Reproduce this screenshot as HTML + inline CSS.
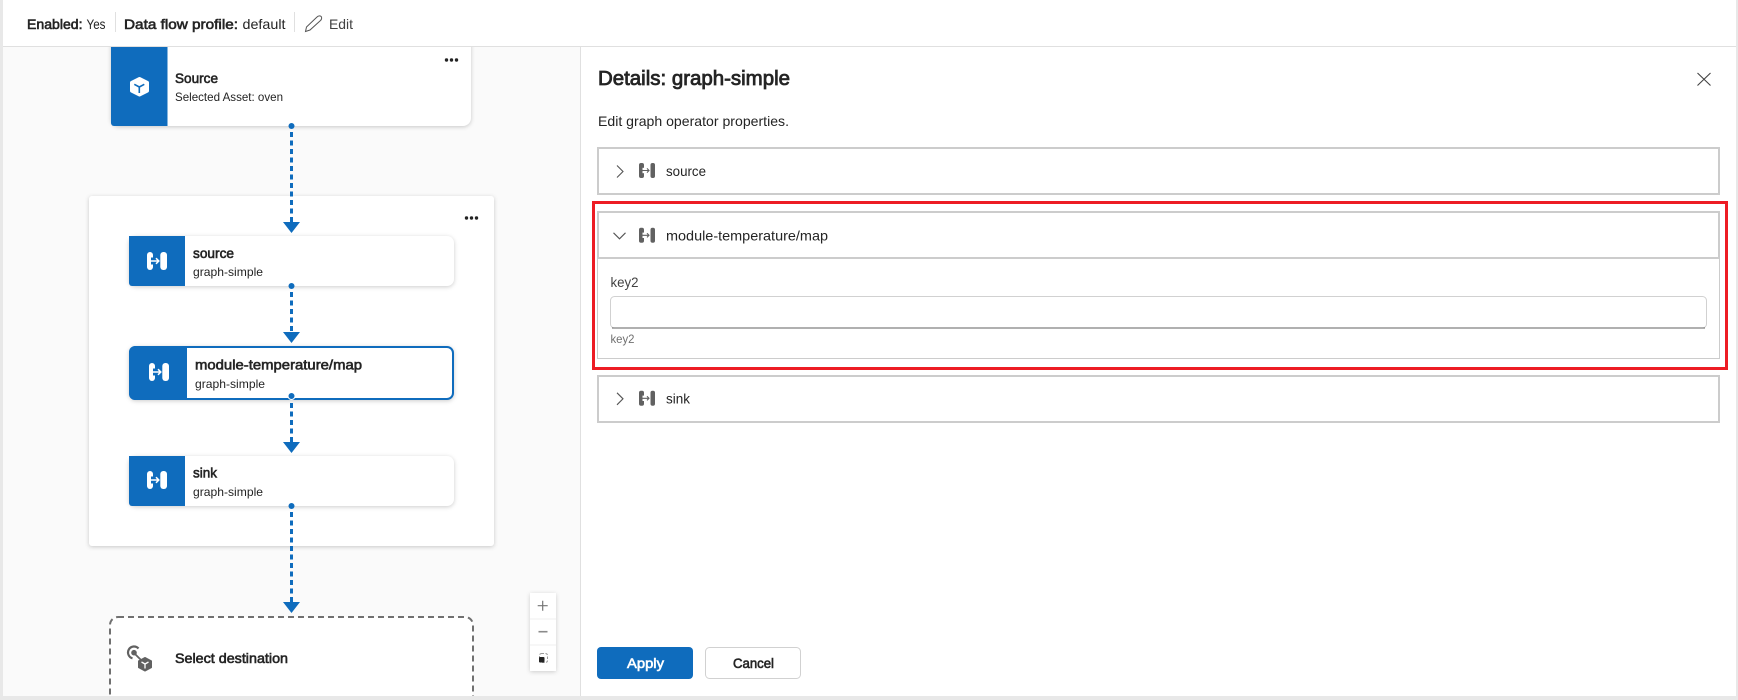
<!DOCTYPE html>
<html>
<head>
<meta charset="utf-8">
<style>
html,body{margin:0;padding:0;background:#fff;width:1738px;height:700px;overflow:hidden}
svg{display:block;filter:blur(.3px)}
text{font-family:"Liberation Sans",sans-serif;fill:#242424;font-size:14px;white-space:pre}
.s{stroke:#242424;stroke-width:.6px}
.t12{font-size:12px}
.sh{filter:drop-shadow(0 1px 2px rgba(0,0,0,.2))}
.sh2{filter:drop-shadow(0 1px 2px rgba(0,0,0,.18))}
.conn{stroke:#0f6cbd;stroke-width:3;stroke-dasharray:5 3.5;fill:none}
</style>
</head>
<body>
<svg width="1738" height="700" viewBox="0 0 1738 700" xmlns="http://www.w3.org/2000/svg">
<defs>
<g id="graphW">
<rect x="0" y="0" width="6" height="18" rx="3" fill="#fff"/>
<rect x="4" y="5.500" width="2.500" height="7" fill="#0f6cbd"/>
<rect x="13.300" y="0" width="6.700" height="18" rx="3" fill="#fff"/>
<path d="M3.500 9H11.800M9 6.200L11.800 9L9 11.800" fill="none" stroke="#fff" stroke-width="1.500"/>
</g>
<g id="graphG">
<rect x="0" y="0" width="5" height="15" rx="2" fill="#616161"/>
<rect x="3.500" y="4.800" width="2" height="5.400" fill="#fff"/>
<rect x="11.500" y="0" width="4.500" height="15" rx="2" fill="#616161"/>
<path d="M3 7.500H10M8 5.400L10 7.500L8 9.600" fill="none" stroke="#616161" stroke-width="1.100"/>
</g>
<g id="dots" fill="#242424">
<circle cx="2" cy="0" r="1.700"/><circle cx="7" cy="0" r="1.700"/><circle cx="12" cy="0" r="1.700"/>
</g>
</defs>

<!-- canvas -->
<rect x="0" y="0" width="580" height="700" fill="#fafafa"/>

<!-- Source card -->
<g class="sh">
<rect x="111" y="20" width="360" height="106" rx="8" fill="#fff"/>
</g>
<path d="M111 20H167.500V126H114a3 3 0 0 1-3-3Z" fill="#0f6cbd"/>
<path d="M139.500 78.500L147.500 82.500V91L139.500 95L131.500 91V82.500Z" fill="#fff" stroke="#fff" stroke-width="3" stroke-linejoin="round"/>
<path d="M139.300 87V93M139.300 87L134.300 84.300M139.300 87L144.300 84.300" fill="none" stroke="#0f6cbd" stroke-width="1.600"/>
<text x="175" y="83" class="s" textLength="43" lengthAdjust="spacingAndGlyphs">Source</text>
<text x="175" y="101" class="t12" textLength="108" lengthAdjust="spacingAndGlyphs">Selected Asset: oven</text>
<use href="#dots" x="444.500" y="60"/>

<!-- Group box -->
<rect class="sh" x="89" y="196" width="405" height="350" rx="3" fill="#fff"/>
<use href="#dots" x="464.500" y="218"/>

<!-- Connector 1 -->
<path class="conn" d="M291.500 132V222"/>
<circle cx="291.500" cy="126" r="3" fill="#0f6cbd"/>
<path d="M283 222H300L291.500 233Z" fill="#0f6cbd"/>

<!-- source node -->
<rect class="sh" x="129" y="236" width="325" height="50" rx="7" fill="#fff"/>
<path d="M129 236H185V286H132a3 3 0 0 1-3-3Z" fill="#0f6cbd"/>
<use href="#graphW" x="147" y="252"/>
<text x="193" y="258" class="s" textLength="41" lengthAdjust="spacingAndGlyphs">source</text>
<text x="193" y="276" class="t12" textLength="70" lengthAdjust="spacingAndGlyphs">graph-simple</text>

<!-- Connector 2 -->
<path class="conn" d="M291.500 292V332"/>
<circle cx="291.500" cy="286" r="3" fill="#0f6cbd"/>
<path d="M283 332H300L291.500 343Z" fill="#0f6cbd"/>

<!-- module node -->
<rect class="sh" x="130" y="347" width="323" height="52" rx="6" fill="#fff" stroke="#0f6cbd" stroke-width="2"/>
<path d="M135 346H187V400H135a6 6 0 0 1-6-6V352a6 6 0 0 1 6-6Z" fill="#0f6cbd"/>
<use href="#graphW" x="149" y="363"/>
<text x="195" y="369.500" class="s" textLength="167" lengthAdjust="spacingAndGlyphs">module-temperature/map</text>
<text x="195" y="388" class="t12" textLength="70" lengthAdjust="spacingAndGlyphs">graph-simple</text>

<!-- Connector 3 -->
<path class="conn" d="M291.500 403V442"/>
<circle cx="291.500" cy="396" r="3.500" fill="#0f6cbd" stroke="#fff" stroke-width="1"/>
<path d="M283 442H300L291.500 453Z" fill="#0f6cbd"/>

<!-- sink node -->
<rect class="sh" x="129" y="456" width="325" height="50" rx="7" fill="#fff"/>
<path d="M129 456H185V506H132a3 3 0 0 1-3-3Z" fill="#0f6cbd"/>
<use href="#graphW" x="147" y="471"/>
<text x="193" y="477.500" class="s" textLength="24" lengthAdjust="spacingAndGlyphs">sink</text>
<text x="193" y="496" class="t12" textLength="70" lengthAdjust="spacingAndGlyphs">graph-simple</text>

<!-- Connector 4 -->
<path class="conn" d="M291.500 512V602"/>
<circle cx="291.500" cy="506" r="3" fill="#0f6cbd"/>
<path d="M283 602H300L291.500 613Z" fill="#0f6cbd"/>

<!-- Select destination -->
<rect x="110" y="617" width="363" height="110" rx="8" fill="#fff" stroke="#707070" stroke-width="2" stroke-dasharray="6 4"/>
<path d="M138.500 648.500A6 6 0 1 0 132.500 658.300" fill="none" stroke="#616161" stroke-width="2.200"/>
<circle cx="134" cy="652.700" r="2.800" fill="#616161"/>
<path d="M135 654L141 660" stroke="#616161" stroke-width="1.800"/>
<path d="M145 657.500L151.500 661V667.500L145 671L138.500 667.500V661Z" fill="#616161" stroke="#616161" stroke-width="1" stroke-linejoin="round"/>
<path d="M145 664V668.500M145 664L141.500 662M145 664L148.500 662" fill="none" stroke="#fff" stroke-width="1.300"/>
<text x="175" y="663" class="s" textLength="113" lengthAdjust="spacingAndGlyphs">Select destination</text>

<!-- Zoom controls -->
<rect class="sh2" x="530" y="593" width="26" height="78" fill="#fff"/>
<path d="M530 619H556M530 645H556" stroke="#efefef" stroke-width="1"/>
<path d="M542.700 600.700V610.700M537.700 605.700H547.700" stroke="#757575" stroke-width="1.200"/>
<path d="M538.500 631.700H547.500" stroke="#8a8a8a" stroke-width="1.600"/>
<rect x="539.500" y="653.500" width="8" height="9" rx="2" fill="none" stroke="#9a9a9a" stroke-width="1" stroke-dasharray="2.500 1.500"/>
<rect x="539" y="657" width="5.500" height="5.500" rx="1" fill="#242424"/>

<!-- Top bar -->
<rect x="0" y="0" width="1738" height="46" fill="#fff"/>
<rect x="0" y="46" width="1738" height="1" fill="#e0e0e0"/>
<text x="27" y="29" class="s" textLength="55.500" lengthAdjust="spacingAndGlyphs">Enabled:</text>
<text x="86.500" y="29" textLength="19" lengthAdjust="spacingAndGlyphs">Yes</text>
<rect x="115" y="12" width="1" height="20" fill="#e0e0e0"/>
<text x="124" y="29" class="s" textLength="114" lengthAdjust="spacingAndGlyphs">Data flow profile:</text>
<text x="242.500" y="29" textLength="43" lengthAdjust="spacingAndGlyphs">default</text>
<rect x="294" y="12" width="1" height="20" fill="#e0e0e0"/>
<path d="M305.500 31.500L306.500 27L317 17C318.500 15.500 320.500 15.500 321.300 16.700C322 18 321.500 19.500 320.500 20.500L310 30Z" fill="none" stroke="#555" stroke-width="1"/>
<text x="329" y="29" style="fill:#424242" textLength="24" lengthAdjust="spacingAndGlyphs">Edit</text>

<!-- Right panel -->
<rect x="580" y="47" width="1156" height="649" fill="#fff"/>
<rect x="580" y="47" width="1" height="649" fill="#e0e0e0"/>
<text x="598" y="85" class="s" style="font-size:20px;stroke-width:.8px" textLength="192" lengthAdjust="spacingAndGlyphs">Details: graph-simple</text>
<path d="M1697.500 73L1710.500 85.500M1710.500 73L1697.500 85.500" stroke="#424242" stroke-width="1.100" fill="none"/>
<text x="598" y="126" textLength="191" lengthAdjust="spacingAndGlyphs">Edit graph operator properties.</text>

<!-- Accordion 1 -->
<rect x="598" y="148" width="1121" height="46" fill="#fff" stroke="#ccc" stroke-width="2"/>
<path d="M617 165.500L623 171.500L617 177.500" fill="none" stroke="#555" stroke-width="1.100"/>
<use href="#graphG" x="639" y="163"/>
<text x="666" y="176" textLength="40" lengthAdjust="spacingAndGlyphs">source</text>

<!-- Accordion 2 -->
<rect x="597.500" y="258" width="1122" height="100.500" fill="#fff" stroke="#ccc" stroke-width="1"/>
<rect x="598" y="212" width="1121" height="46" fill="#fff" stroke="#ccc" stroke-width="2"/>
<path d="M613.500 232.800L619.500 238.800L625.500 232.800" fill="none" stroke="#555" stroke-width="1.100"/>
<use href="#graphG" x="639" y="227.800"/>
<text x="666" y="240.300" textLength="162" lengthAdjust="spacingAndGlyphs">module-temperature/map</text>
<text x="610.500" y="287" style="fill:#424242" textLength="28" lengthAdjust="spacingAndGlyphs">key2</text>
<rect x="610.500" y="296.500" width="1096" height="31.500" rx="4" fill="#fff" stroke="#d1d1d1" stroke-width="1"/>
<path d="M612 328H1705" stroke="#616161" stroke-width="1"/>
<text x="610.500" y="343" class="t12" style="fill:#707070" textLength="24" lengthAdjust="spacingAndGlyphs">key2</text>

<!-- Red box -->
<rect x="593.500" y="202.500" width="1133" height="166" fill="none" stroke="#ed1c24" stroke-width="3"/>

<!-- Accordion 3 -->
<rect x="598" y="376" width="1121" height="46" fill="#fff" stroke="#ccc" stroke-width="2"/>
<path d="M617 392.800L623 398.800L617 404.800" fill="none" stroke="#555" stroke-width="1.100"/>
<use href="#graphG" x="639" y="390.800"/>
<text x="666" y="403.300" textLength="24" lengthAdjust="spacingAndGlyphs">sink</text>

<!-- Buttons -->
<rect x="597" y="647" width="96" height="32" rx="4" fill="#0f6cbd"/>
<text x="627" y="668" class="s" style="fill:#fff;stroke:#fff" textLength="37" lengthAdjust="spacingAndGlyphs">Apply</text>
<rect x="705.500" y="647.500" width="95" height="31" rx="4" fill="#fff" stroke="#d1d1d1" stroke-width="1"/>
<text x="733" y="668" class="s" textLength="41" lengthAdjust="spacingAndGlyphs">Cancel</text>

<!-- Window edges -->
<rect x="0" y="0" width="3" height="700" fill="#e8e8e8"/>
<rect x="1736" y="0" width="2" height="700" fill="#e8e8e8"/>
<rect x="0" y="696" width="1738" height="4" fill="#e8e8e8"/>
</svg>
</body>
</html>
